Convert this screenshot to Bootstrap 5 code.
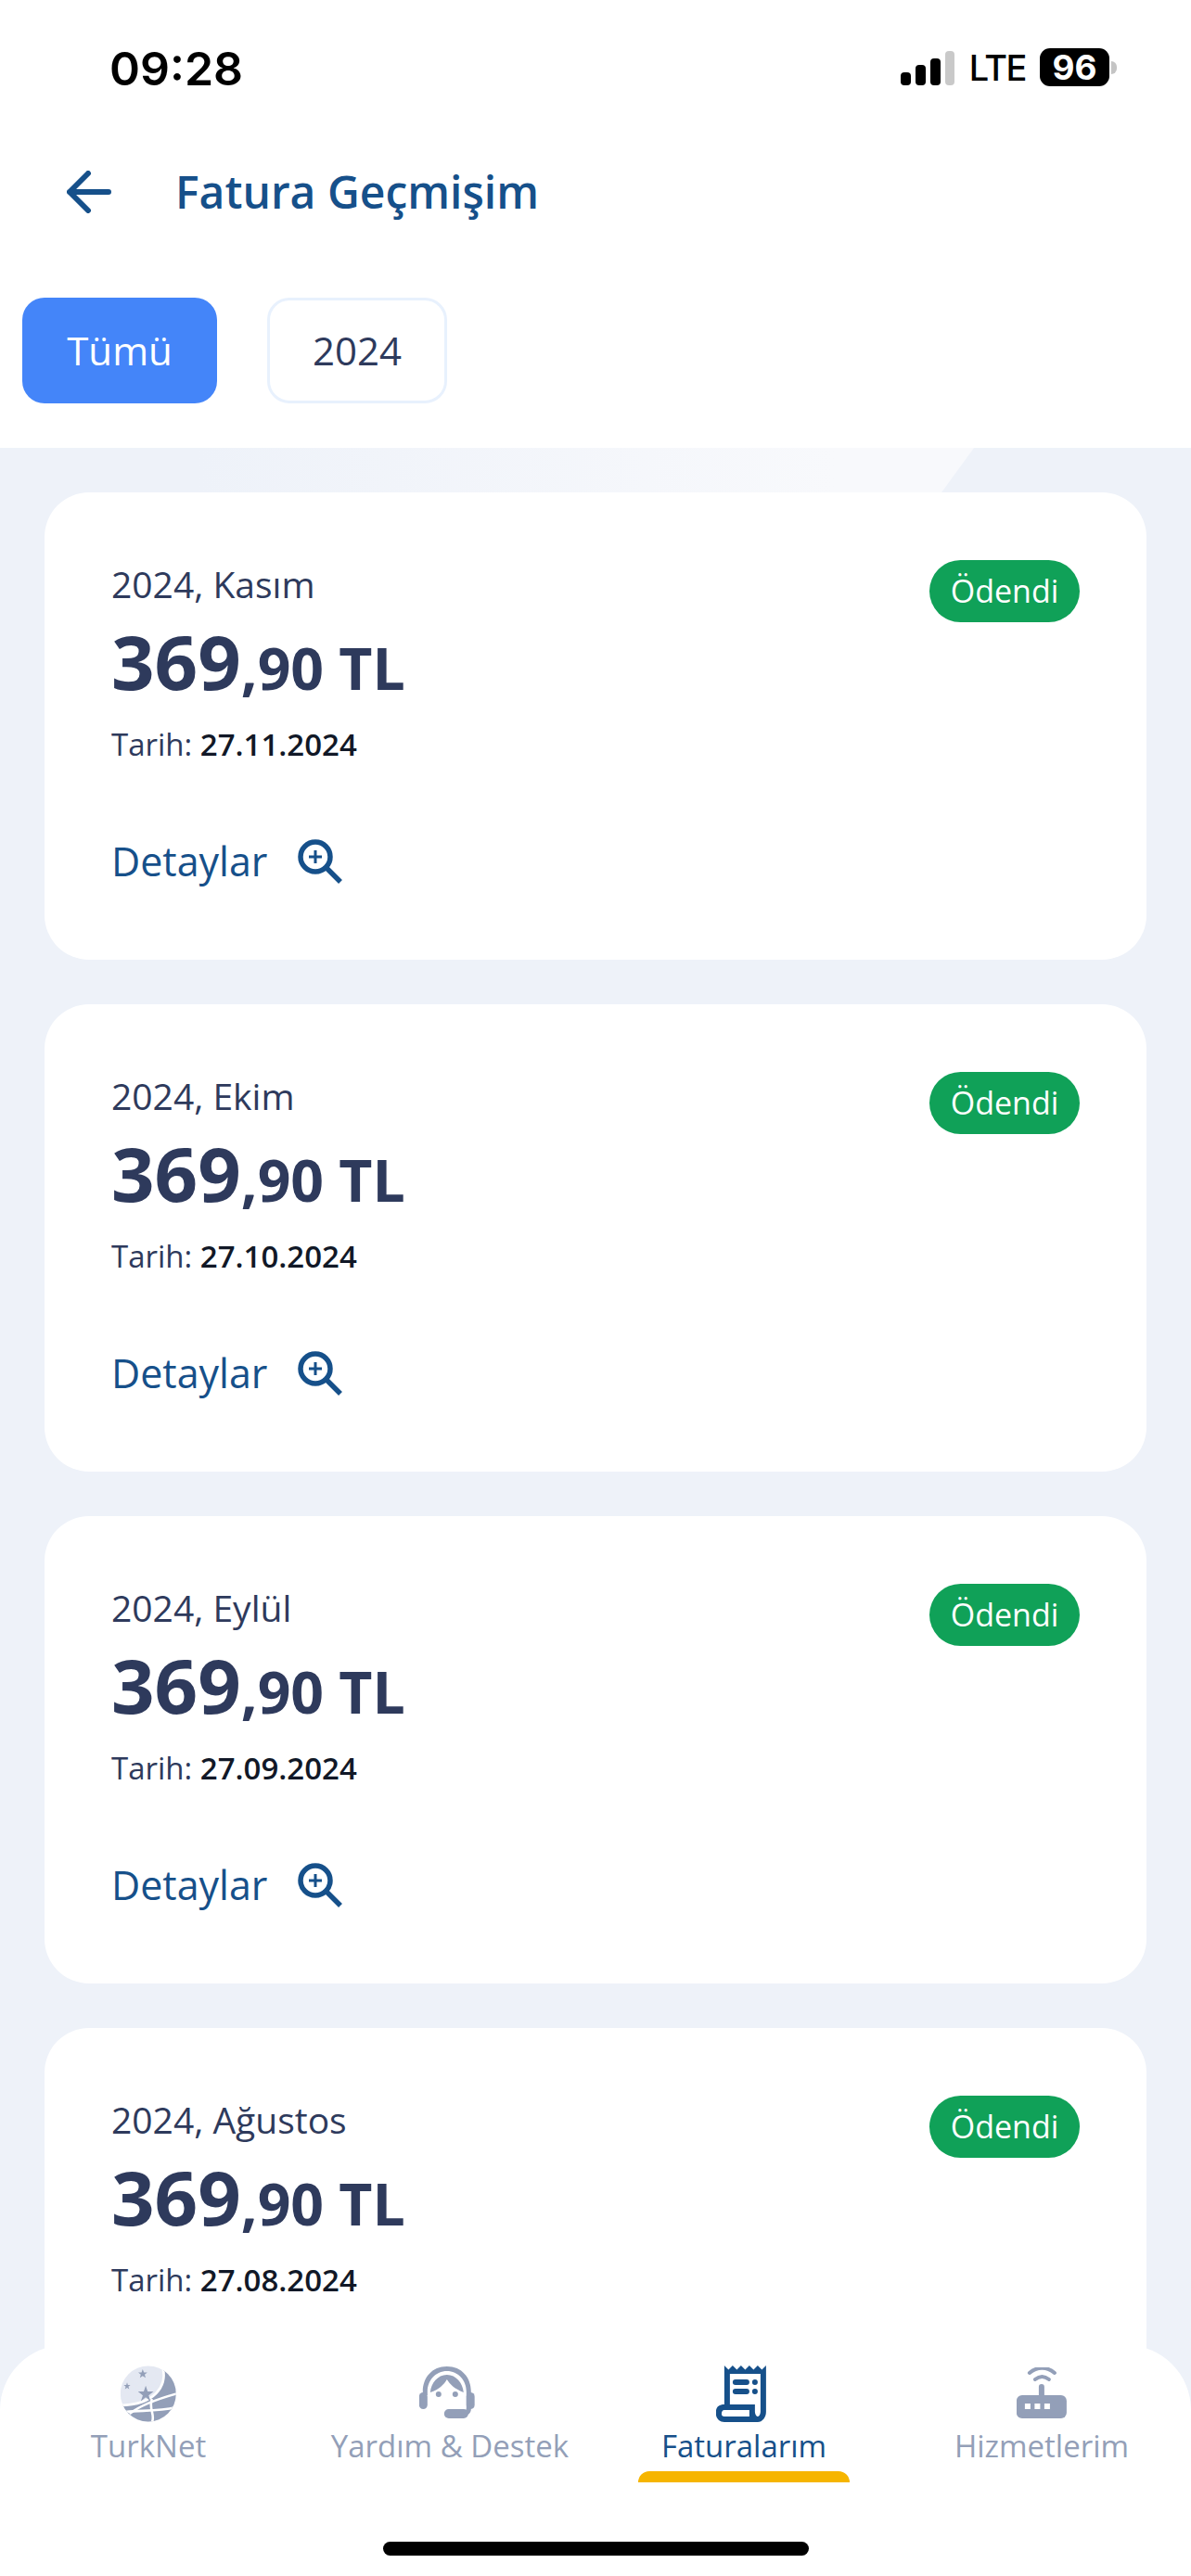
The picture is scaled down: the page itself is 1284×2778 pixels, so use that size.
<!DOCTYPE html>
<html lang="tr">
<head>
<meta charset="utf-8">
<title>Fatura Geçmişim</title>
<link href="https://cdn.jsdelivr.net/npm/bootstrap@5.3.0/dist/css/bootstrap.min.css" rel="stylesheet">
<style>
html,body{margin:0;height:2778px;overflow:hidden}
body{font-family:"Open Sans","Noto Sans",sans-serif;background:#eef2f9;color:#2e3a5c;width:1284px;position:relative}
.topzone{background:#fff;height:483px}
.statusrow{height:141px;padding:52px 80px 0 118px}
.clock{font-family:Inter,sans-serif;font-weight:600;font-size:50px;line-height:44px;color:#000}
.lte{font-family:Inter,sans-serif;font-weight:500;font-size:38px;line-height:38px;letter-spacing:-1.5px;color:#000;margin:0 15px 0 15px}
.batt{font-family:Inter,sans-serif;font-weight:700;font-size:37px;line-height:41px;color:#fff;background:#000;border-radius:11px;width:75px;height:41px;text-align:center}
.battcap{width:6px;height:14px;background:#c4c4c4;border-radius:0 6px 6px 0;margin-left:2px}
.headrow{height:132px;padding-left:72px}
.pagetitle{font-size:48px;font-weight:600;color:#16508a;margin:0 0 0 69px;line-height:66px}
.chips{padding:48px 0 0 24px;gap:54px}
.chip{font-size:42px;line-height:54px;height:114px;border-radius:24px;padding:30px 0;text-align:center}
.chip-on{width:208px;margin-right:2px;background:#4485f9;color:#fff}
.chip-on{width:210px;margin-right:0}
.chip-off{width:194px;background:#fff;color:#2e3a5c;border:3px solid #e8f1fd;padding-top:27px}
.wedge{position:absolute;left:0;top:483px;width:1060px;height:48px;background:linear-gradient(90deg,#eef2f9 20%,#f8f9fc 85%);clip-path:polygon(0 0,1050px 0,1015px 48px,0 48px)}
.listing{padding:48px 48px 0;gap:48px;position:relative}
.bill{height:504px;border-radius:48px;border:0;padding:73px 72px 0;flex:none}
.bill-month{font-size:39px;line-height:52px;color:#2e3a5c}
.bill-amt{font-size:81.5px;font-weight:700;line-height:92px;color:#2e3a5c;margin-top:11px}
.bill-amt span{font-size:62.5px}
.bill-date{font-size:33px;line-height:46px;color:#2e3a5c;margin-top:14px}
.bill-date b{color:#111827;font-weight:600}
.bill-link{font-size:43px;font-weight:500;line-height:58px;color:#16508a;margin-top:74px;gap:33px}
.paid{position:absolute;top:73px;right:72px;width:162px;height:67px;border-radius:34px;background:#10a158;color:#fff;font-size:34px;line-height:67px;text-align:center}
.tabbar{position:absolute;left:0;right:0;bottom:0;height:249px;background:#fff;border-radius:70px 70px 0 0;z-index:5}
.tabcell{position:absolute;top:22px;text-align:center;font-size:33px;line-height:42px;color:#939fb8;transform:translateX(-50%);white-space:nowrap}
.tabcell svg{display:block;margin:0 auto 5px}
.tabcell svg.nudge{transform:translateX(-3px)}
.tab-on{color:#16508a}
.tabmark{position:absolute;left:688px;top:136px;width:228px;height:12px;border-radius:12px 12px 0 0;background:#f6b500}
.homebar{position:absolute;left:413px;top:212px;width:459px;height:15px;border-radius:8px;background:#000}
</style>
</head>
<body>
<div class="topzone">
  <div class="statusrow d-flex justify-content-between align-items-start">
    <div class="clock">09:28</div>
    <div class="d-flex align-items-center">
      <svg width="59" height="38" viewBox="0 0 59 38"><rect x="0" y="24" width="11" height="14" rx="4"/><rect x="16" y="16" width="11" height="22" rx="4"/><rect x="32" y="9" width="11" height="29" rx="4"/><rect x="48" y="1" width="10" height="37" rx="4" fill="#c9c9c9"/></svg>
      <span class="lte">LTE</span>
      <span class="batt">96</span>
      <span class="battcap"></span>
    </div>
  </div>
  <div class="headrow d-flex align-items-center">
    <svg width="48" height="46" viewBox="0 0 48 46" fill="none" stroke="#16508a" stroke-width="6" stroke-linecap="round" stroke-linejoin="round"><path d="M23 3 3 23l20 20M3 23h42"/></svg>
    <h1 class="pagetitle">Fatura Geçmişim</h1>
  </div>
  <div class="chips d-flex">
    <div class="chip chip-on">Tümü</div>
    <div class="chip chip-off">2024</div>
  </div>
</div>
<div class="wedge"></div>
<div class="listing d-flex flex-column">
  <div class="card bill"><span class="paid">Ödendi</span><div class="bill-month">2024, Kasım</div><div class="bill-amt">369<span>,90 TL</span></div><div class="bill-date">Tarih: <b>27.11.2024</b></div><div class="bill-link d-flex align-items-center">Detaylar<svg width="48" height="48" viewBox="0 0 48 48" fill="none" stroke="#16508a"><circle cx="19" cy="19" r="16" stroke-width="5.5"/><path d="M19 12v14M12 19h14" stroke-width="3"/><path d="M31 31l15 15" stroke-width="5.5"/></svg></div></div>
  <div class="card bill"><span class="paid">Ödendi</span><div class="bill-month">2024, Ekim</div><div class="bill-amt">369<span>,90 TL</span></div><div class="bill-date">Tarih: <b>27.10.2024</b></div><div class="bill-link d-flex align-items-center">Detaylar<svg width="48" height="48" viewBox="0 0 48 48" fill="none" stroke="#16508a"><circle cx="19" cy="19" r="16" stroke-width="5.5"/><path d="M19 12v14M12 19h14" stroke-width="3"/><path d="M31 31l15 15" stroke-width="5.5"/></svg></div></div>
  <div class="card bill"><span class="paid">Ödendi</span><div class="bill-month">2024, Eylül</div><div class="bill-amt">369<span>,90 TL</span></div><div class="bill-date">Tarih: <b>27.09.2024</b></div><div class="bill-link d-flex align-items-center">Detaylar<svg width="48" height="48" viewBox="0 0 48 48" fill="none" stroke="#16508a"><circle cx="19" cy="19" r="16" stroke-width="5.5"/><path d="M19 12v14M12 19h14" stroke-width="3"/><path d="M31 31l15 15" stroke-width="5.5"/></svg></div></div>
  <div class="card bill"><span class="paid">Ödendi</span><div class="bill-month">2024, Ağustos</div><div class="bill-amt">369<span>,90 TL</span></div><div class="bill-date">Tarih: <b>27.08.2024</b></div></div>
</div>
<nav class="tabbar">
  <div class="tabcell" style="left:160px">
    <svg width="60" height="61" viewBox="0 0 60 61"><defs><clipPath id="globe"><circle cx="30" cy="30.5" r="30"/></clipPath></defs><g clip-path="url(#globe)"><rect width="60" height="61" fill="#e4e8f2"/><path d="M46 3C50 22 38 42 0 43V61H60V3Z" fill="#939fb8"/><g fill="none" stroke="#fff" stroke-width="2.6"><path d="M46 3C50 22 38 42 0 43"/><path d="M62 30C40 36 20 44 10 52"/><path d="M60 45C40 50 22 48 6 50"/><path d="M34 36C30 46 38 54 34 61"/></g></g><g fill="#939fb8"><path d="m26 15 2 6 6 0-5 4 2 6-5-4-5 4 2-6-5-4 6 0z" transform="translate(0 6) scale(1.05)"/><path d="m21 4 1.4 3.4 3.6.2-2.800 2.200 1 3.400-3.200-2-3 2 1-3.400-2.800-2.200 3.600-.2z" transform="translate(3 0)"/><path d="m8 18 1 3 3 0-2.400 2 1 3.200-2.600-1.800-2.600 1.800 1-3.200-2.400-2 3 0z" transform="translate(0 2) scale(.9)"/></g></svg>
    TurkNet
  </div>
  <div class="tabcell" style="left:485px">
    <svg class="nudge" width="60" height="61" viewBox="0 0 60 61" fill="#939fb8"><path d="M30 1C14 1 4 13 4 28v4h5v-4C9 16 18 6 30 6s21 10 21 22v18c0 2-1 3-3 3H35v5h14c4 0 7-3 7-7V28C56 13 46 1 30 1Z"/><rect x="0" y="29" width="9" height="18" rx="4.500"/><rect x="51" y="29" width="9" height="18" rx="4.500"/><rect x="27" y="49" width="26" height="10" rx="5" transform="translate(0 -2)"/><path d="M30 10C20 10 13 19 12 29 22 26 27 20 30 15c3 5 8 10 18 14C47 19 40 10 30 10Z"/><circle cx="21" cy="31" r="3"/><circle cx="39" cy="31" r="3"/></svg>
    Yardım &amp; Destek
  </div>
  <div class="tabcell tab-on" style="left:802px">
    <svg class="nudge" width="54" height="61" viewBox="0 0 54 61" fill="none" stroke="none"><path fill="#16508a" d="M9 0l4.500 4.500L18 0l4.500 4.500L27 0l4.500 4.500L36 0l4.500 4.500L45 0l4.500 4.500L54 0v50c0 6-4 11-9 11H9c-5 0-9-3.500-9-9V50c0-5 3-8 9-8Zm6 9v33h27v8c0 3 2 5 3 5s3-2 3-5V9ZM6 52c0 2 1 3 3 3h27v-7H9c-2 0-3 2-3 4Z"/><rect x="18" y="15" width="18" height="6" rx="3" fill="#16508a"/><rect x="18" y="25" width="18" height="6" rx="3" fill="#16508a"/><circle cx="42" cy="18" r="3" fill="#16508a"/><circle cx="42" cy="28" r="3" fill="#16508a"/></svg>
    Faturalarım
  </div>
  <div class="tabcell" style="left:1123px">
    <svg width="54" height="55" viewBox="0 0 54 55" fill="#939fb8" style="margin-top:2px;margin-bottom:9px"><path d="M14 6C22 -1 33 -1 41 6" fill="none" stroke="#939fb8" stroke-width="4" stroke-linecap="round"/><path d="M20 13C25 9 30 9 35 13" fill="none" stroke="#939fb8" stroke-width="4" stroke-linecap="round"/><rect x="24" y="18" width="6" height="20" rx="3"/><rect x="0" y="30" width="54" height="25" rx="6"/><rect x="9" y="39" width="6" height="6" fill="#fff"/><rect x="19.500" y="39" width="6" height="6" fill="#fff"/><rect x="30" y="39" width="6" height="6" fill="#fff"/></svg>
    Hizmetlerim
  </div>
  <div class="tabmark"></div>
  <div class="homebar"></div>
</nav>
<script src="https://cdn.jsdelivr.net/npm/bootstrap@5.3.0/dist/js/bootstrap.bundle.min.js"></script>
</body>
</html>
